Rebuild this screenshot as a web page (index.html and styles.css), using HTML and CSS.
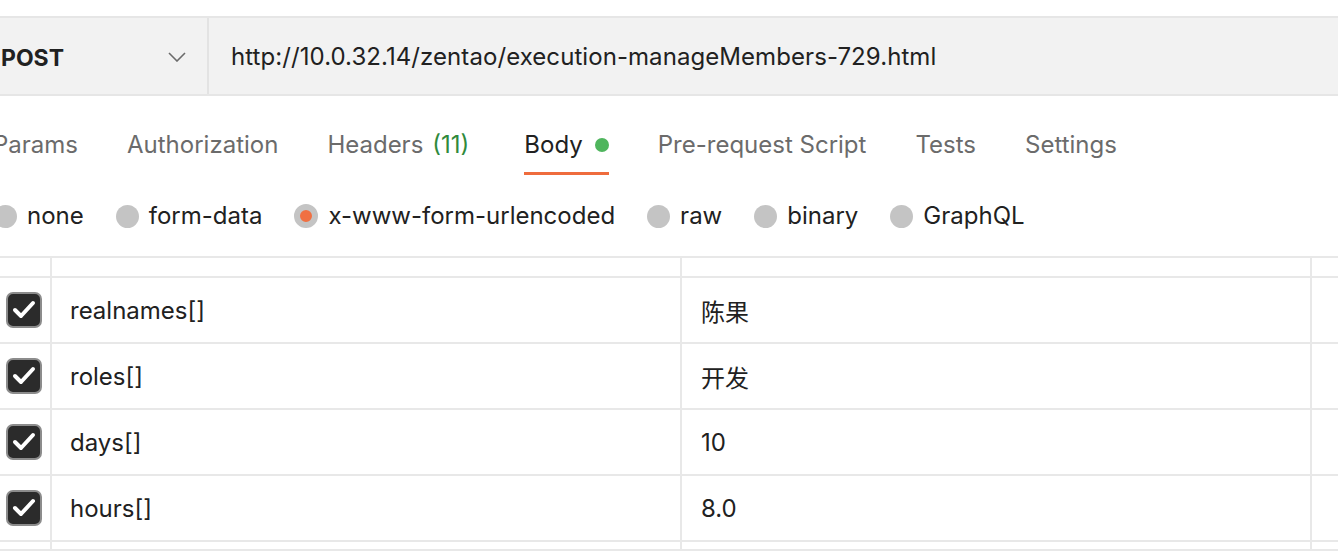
FILE: index.html
```html
<!DOCTYPE html>
<html>
<head>
<meta charset="utf-8">
<link rel="stylesheet" href="styles.css">
</head>
<body>
<div class="page">
  <div class="urlbar">
    <div class="method">
      <span class="method-name">POST</span>
      <svg class="chev" width="18" height="10" viewBox="0 0 18 10"><polyline points="1,1 9,9 17,1" fill="none" stroke="#6b6b6b" stroke-width="1.6"/></svg>
    </div>
    <div class="url">http://10.0.32.14/zentao/execution-manageMembers-729.html</div>
  </div>

  <div class="tabs">
    <div class="tab">Params</div>
    <div class="tab">Authorization</div>
    <div class="tab tab-headers">Headers <span class="count">(11)</span></div>
    <div class="tab active">Body <span class="dot"></span></div>
    <div class="tab">Pre-request Script</div>
    <div class="tab">Tests</div>
    <div class="tab">Settings</div>
  </div>

  <div class="radios">
    <div class="radio"><span class="circle"></span>none</div>
    <div class="radio"><span class="circle"></span>form-data</div>
    <div class="radio"><span class="circle selected"></span>x-www-form-urlencoded</div>
    <div class="radio"><span class="circle"></span>raw</div>
    <div class="radio"><span class="circle"></span>binary</div>
    <div class="radio"><span class="circle"></span>GraphQL</div>
  </div>

  <div class="table">
    <div class="row head">
      <div class="cell c-check"></div>
      <div class="cell c-key"></div>
      <div class="cell c-val"></div>
      <div class="cell c-desc"></div>
    </div>
    <div class="row">
      <div class="cell c-check"><svg class="cb" width="36" height="36" viewBox="0 0 36 36"><rect x="1" y="1" width="34" height="34" rx="6" fill="#2b2b2b" stroke="#8c8c8c" stroke-width="2"/><path d="M9 18 L15 24 L27 11" fill="none" stroke="#fff" stroke-width="4" stroke-linecap="round" stroke-linejoin="round"/></svg></div>
      <div class="cell c-key">realnames[]</div>
      <div class="cell c-val">陈果</div>
      <div class="cell c-desc"></div>
    </div>
    <div class="row">
      <div class="cell c-check"><svg class="cb" width="36" height="36" viewBox="0 0 36 36"><rect x="1" y="1" width="34" height="34" rx="6" fill="#2b2b2b" stroke="#8c8c8c" stroke-width="2"/><path d="M9 18 L15 24 L27 11" fill="none" stroke="#fff" stroke-width="4" stroke-linecap="round" stroke-linejoin="round"/></svg></div>
      <div class="cell c-key">roles[]</div>
      <div class="cell c-val">开发</div>
      <div class="cell c-desc"></div>
    </div>
    <div class="row">
      <div class="cell c-check"><svg class="cb" width="36" height="36" viewBox="0 0 36 36"><rect x="1" y="1" width="34" height="34" rx="6" fill="#2b2b2b" stroke="#8c8c8c" stroke-width="2"/><path d="M9 18 L15 24 L27 11" fill="none" stroke="#fff" stroke-width="4" stroke-linecap="round" stroke-linejoin="round"/></svg></div>
      <div class="cell c-key">days[]</div>
      <div class="cell c-val">10</div>
      <div class="cell c-desc"></div>
    </div>
    <div class="row">
      <div class="cell c-check"><svg class="cb" width="36" height="36" viewBox="0 0 36 36"><rect x="1" y="1" width="34" height="34" rx="6" fill="#2b2b2b" stroke="#8c8c8c" stroke-width="2"/><path d="M9 18 L15 24 L27 11" fill="none" stroke="#fff" stroke-width="4" stroke-linecap="round" stroke-linejoin="round"/></svg></div>
      <div class="cell c-key">hours[]</div>
      <div class="cell c-val">8.0</div>
      <div class="cell c-desc"></div>
    </div>
    <div class="row tail">
      <div class="cell c-check"></div>
      <div class="cell c-key"></div>
      <div class="cell c-val"></div>
      <div class="cell c-desc"></div>
    </div>
  </div>
</div>
</body>
</html>
```

FILE: styles.css
```css
html, body {
  margin: 0;
  padding: 0;
  background: #ffffff;
}
body {
  width: 1338px;
  height: 556px;
  overflow: hidden;
  font-family: Inter, "Noto Sans CJK SC", sans-serif;
  color: #212121;
  font-size: 24px;
}
.page {
  width: 1338px;
  overflow: hidden;
}

/* URL bar */
.urlbar {
  margin-top: 16px;
  height: 76px;
  background: #f2f2f2;
  border-top: 2px solid #e6e6e6;
  border-bottom: 2px solid #e6e6e6;
  display: flex;
  align-items: stretch;
}
.method {
  border-right: 2px solid #e3e3e3;
  display: flex;
  align-items: center;
  justify-content: space-between;
  padding-left: 1px;
  padding-right: 21px;
  box-sizing: border-box;
  width: 209px;
  flex-shrink: 0;
}
.method-name {
  font-weight: 700;
  font-size: 23px;
  color: #212121;
  padding-top: 4px;
}
.chev {
  margin-top: 2px;
}
.url {
  display: flex;
  align-items: center;
  padding-left: 22px;
  color: #212121;
  white-space: nowrap;
  letter-spacing: 0.07px;
}

/* Tabs */
.tabs {
  display: flex;
  gap: 49px;
  margin-left: -7px;
}
.tab {
  padding-top: 35px;
  line-height: 28px;
  padding-bottom: 13px;
  border-bottom: 3px solid transparent;
  color: #6b6b6b;
  white-space: nowrap;
  display: flex;
  align-items: center;
  flex-shrink: 0;
}
.tab-headers {
  margin-right: 6px;
}
.count {
  color: #2f8a3c;
  margin-left: 9px;
}
.tab.active {
  color: #212121;
  border-bottom-color: #ef6c3d;
}
.dot {
  display: inline-block;
  width: 14px;
  height: 14px;
  border-radius: 50%;
  background: #4fb55d;
  margin-left: 12px;
}

/* Radios */
.radios {
  display: flex;
  gap: 32px;
  margin-top: 27px;
  margin-left: -6px;
  height: 28px;
  align-items: center;
}
.radio {
  display: flex;
  align-items: center;
  gap: 10px;
  color: #212121;
  line-height: 28px;
  flex-shrink: 0;
}
.circle {
  width: 23px;
  height: 23px;
  border-radius: 50%;
  background: #c4c4c4;
  box-sizing: border-box;
}
.circle.selected {
  width: 24px;
  height: 24px;
  background: #f07042;
  border: 6px solid #c4c4c4;
}

/* Table */
.table {
  margin-top: 26px;
  border-top: 2px solid #e8e8e8;
}
.row {
  display: flex;
  height: 64px;
  border-bottom: 2px solid #e8e8e8;
}
.row.head {
  height: 18px;
}
.row.tail {
  height: 7px;
}
.cell {
  border-right: 2px solid #e8e8e8;
  display: flex;
  align-items: center;
  box-sizing: border-box;
  flex-shrink: 0;
}
.c-check {
  width: 52px;
  justify-content: center;
  padding-right: 2px;
}
.c-key {
  width: 630px;
  padding-left: 18px;
}
.c-val {
  width: 630px;
  padding-left: 19px;
}
.c-desc {
  width: 26px;
  border-right: none;
}
.cb {
  display: block;
}
```
